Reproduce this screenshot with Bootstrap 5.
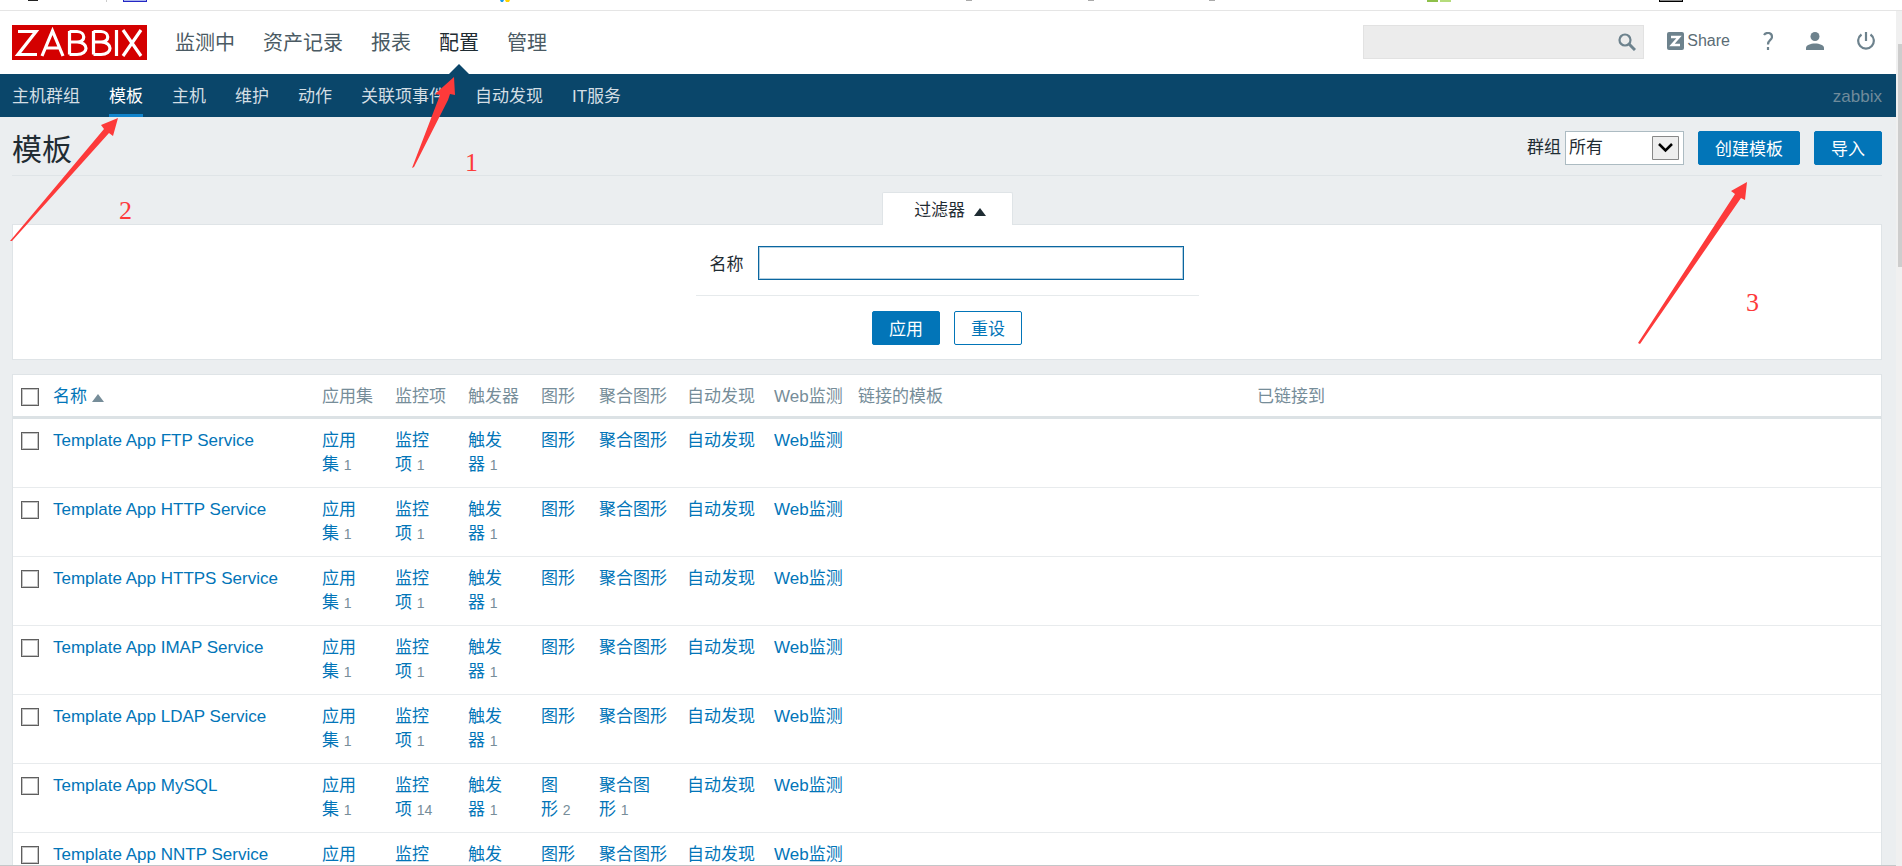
<!DOCTYPE html>
<html lang="zh-CN">
<head>
<meta charset="utf-8">
<meta name="viewport" content="width=device-width, initial-scale=1">
<title>模板</title>
<link href="https://cdn.jsdelivr.net/npm/bootstrap@5.3.0/dist/css/bootstrap.min.css" rel="stylesheet">
<style>
  html, body { height: 100%; }
  body {
    font-family: "Liberation Sans", "Noto Sans CJK SC", sans-serif;
    font-size: 17px; line-height: 24px; color: #1f2c33; background: #ebeef0;
    overflow: hidden;
  }
  a { text-decoration: none; color: #0275b8; }
  .window-frame { height: 100vh; overflow: hidden; position: relative; }
  .browser-strip { height: 11px; background: #fff; border-bottom: 1px solid #e5e5e5; }
  .browser-strip svg { display: block; width: 100%; height: 9px; }
  .pane-row { min-height: 0; }
  .page-pane { min-width: 0; min-height: 0; overflow: hidden; }
  .side-scroll { width: 6px; background: #f0f0f0; padding: 33px 0 0 2px; }
  .side-scroll .thumb { height: 223px; background: #cdcdcd; }
  .top-nav { height: 63px; background: #fff; padding: 0 14px 0 12px; }
  .brand-box { width: 135px; height: 35px; background: #d40000; }
  .brand-box svg { display: block; }
  .main-menu { gap: 28px; margin-left: 28px; font-size: 20px; line-height: 30px; }
  .main-menu a { color: #4a5a63; position: relative; }
  .main-menu a.active { color: #1f2c33; }
  .main-menu a.active::after {
    content: ""; position: absolute; left: 50%; top: 100%; margin: 6px 0 0 -11px;
    border: 11px solid transparent; border-top-width: 0; border-bottom-color: #0a466a;
  }
  .search-box { width: 281px; height: 34px; margin-bottom: 2px; background: #ececec; border: 1px solid #e2e2e2; }
  .search-box input { background: transparent; border: 0; outline: 0; flex: 1; min-width: 0; }
  .search-box button { border: 0; background: none; padding: 0 7px; line-height: 0; }
  .tool-links { margin: 0 7px 3px 23px; gap: 33px; color: #6d828d; font-size: 16px; }
  .tool-links a { color: #5b6c75; line-height: 18px; gap: 3px; }
  .tool-links svg { display: block; }
  .sub-nav { height: 43px; background: #0a466a; padding: 0 14px 0 12px; gap: 29px; }
  .sub-nav a { color: #d3dee4; line-height: 45px; height: 43px; }
  .sub-nav a.active { color: #fff; box-shadow: inset 0 -3px #1184cc; }
  .sub-nav .server { color: #6f8b9b; }
  .content-pad { padding: 0 14px 0 12px; }
  .title-row { height: 59px; padding-top: 14px; border-bottom: 1px solid #dfe4e7; }
  .title-row h1 { font-size: 30px; line-height: 38px; font-weight: 400; margin: 0; }
  .title-tools { gap: 14px; }
  .btn-z { height: 34px; border-radius: 2px; border: 1px solid #0275b8; background: #0275b8; color: #fff; padding: 3px 16px 0; font-size: 17px; line-height: 24px; }
  .btn-z.alt { background: #fff; color: #0275b8; }
  .group-select { position: relative; width: 119px; height: 34px; margin-left: 4px; }
  .group-select select { appearance: none; width: 100%; height: 100%; border: 1px solid #acbbc2; background: #fff; border-radius: 0; padding: 0 3px; color: #1f2c33; line-height: 24px; }
  .group-select svg { position: absolute; right: 5px; top: 5px; pointer-events: none; }
  .filter-tab { width: 131px; height: 33px; margin-bottom: -1px; position: relative; background: #fff; border: 1px solid #dfe4e7; border-bottom: 0; border-radius: 2px 2px 0 0; color: #1f2c33; padding: 3px 0 0 6px; }
  .filter-panel { background: #fff; border: 1px solid #dfe4e7; }
  .filter-fields { width: 503px; padding: 21px 15px 15px 14px; border-bottom: 1px solid #e6eaec; gap: 14px; }
  .filter-fields label { padding-top: 3px; }
  .filter-fields input { height: 34px; min-width: 0; flex: 1; border: 1px solid #0a66a0; box-shadow: inset 0 0 0 1px #b4cfe0; outline: 0; }
  .filter-actions { gap: 14px; padding: 15px 0 14px; }
  .tri { width: 0; height: 0; border: 6px solid transparent; border-top: 0; border-bottom: 8px solid #1f2c33; display: inline-block; }
  .tri.sort { border-bottom-color: #768d99; margin-left: 5px; }
  .list-frame { background: #fff; border: 1px solid #dfe4e7; margin-top: 14px; }
  .tpl-table { table-layout: fixed; width: 100%; margin: 0; }
  .tpl-table th { font-weight: 400; color: #768d99; padding: 10px 6px 7px; border-bottom: 3px solid #dce2e5; white-space: nowrap; }
  .tpl-table td { vertical-align: top; padding: 10px 6px; border-bottom: 1px solid #e8ebed; height: 69px; }
  .tpl-table td:first-child, .tpl-table th:first-child { padding-left: 8px; padding-right: 0; }
  .tpl-table input { appearance: none; display: block; width: 18px; height: 18px; margin: 3px 0; border: 1px solid #5e5e5e; box-shadow: inset 0 0 0 1px #c4c4c4; background: #fff; }
  .tpl-table small { font-size: 14px; color: #768d99; }
  .c-check { width: 34px; } .c-name { width: 269px; } .c-count { width: 73px; }
  .c-graph { width: 58px; } .c-screen { width: 88px; } .c-disc { width: 87px; } .c-web { width: 84px; }
  .c-linked { width: 399px; }
  .status-edge { position: absolute; left: 0; right: 6px; bottom: 0; height: 1px; background: #c4c7c9; }
  .notes { position: absolute; left: 0; top: 0; pointer-events: none; }
  .notes text { font: 26px "Liberation Serif", serif; fill: #fd3a3a; }
</style>
</head>
<body>
<div class="window-frame d-flex flex-column">
  <div class="browser-strip flex-shrink-0">
    <svg aria-hidden="true"><path d="M28 0h10v1h-10z" fill="#222"/><path d="M106 0h1v2h-1z" fill="#ccc"/><rect x="123.500" y="-6" width="23" height="7.500" fill="#aab4ee" stroke="#2427c4"/><path d="M500 0h4l-1 2h-2z" fill="#1a9be8"/><path d="M505 0h5l-1 2h-3z" fill="#ffd400"/><path d="M966 0h6v1h-6zM1088 0h6v1h-6zM1209 0h6v1h-6z" fill="#aaa"/><path d="M1427 0h11v2h-11z" fill="#8ec04a"/><path d="M1440 0h11v2h-11z" fill="#b5dc7c"/><rect x="1659.500" y="-6" width="23" height="7.500" fill="#888" stroke="#000"/></svg>
  </div>
  <div class="pane-row d-flex flex-grow-1">
    <div class="page-pane flex-grow-1">
      <header>
        <div class="top-nav d-flex align-items-center">
          <a class="brand-box" href="#" aria-label="ZABBIX"><svg width="135" height="35" aria-hidden="true"><path d="M6 6.500H24L6 29.500H25M30 31L40.500 6L51 31M34 23H47M57.500 6V29.500M57.500 6.500H65C74 7 74 17 65 17H57.500M65 17C77 17 77 29.500 65 29.500H57.500M81.500 6V29.500M81.500 6.500H89C98 7 98 17 89 17H81.500M89 17C101 17 101 29.500 89 29.500H81.500M104.500 5V31M111 5L129 31M129 5L111 31" fill="none" stroke="#fff" stroke-width="3.200"/></svg></a>
          <nav class="main-menu d-flex"><a href="#">监测中</a><a href="#">资产记录</a><a href="#">报表</a><a href="#" class="active">配置</a><a href="#">管理</a></nav>
          <form class="search-box d-flex ms-auto"><input type="text" aria-label="搜索"><button type="button" aria-label="搜索"><svg width="18" height="18" fill="none" stroke="#6d828d"><circle cx="7" cy="7" r="5.500" stroke-width="2.200"/><path d="M11 11l6 6" stroke-width="3"/></svg></button></form>
          <div class="tool-links d-flex align-items-center">
            <a href="#" class="d-flex align-items-center"><svg width="17" height="18"><rect width="17" height="18" rx="2" fill="#6d828d"/><path d="M4 5H12L5 13H13" fill="none" stroke="#fff" stroke-width="2.500"/></svg>Share</a>
            <a href="#" aria-label="帮助"><svg width="10" height="18" fill="none" stroke="#6d828d" stroke-width="2.200"><path d="M1 3C3 0 9 0 9 5C9 8 5 8 5 12.500M5 15v3"/></svg></a>
            <a href="#" aria-label="用户"><svg width="18" height="18" fill="#6d828d"><circle cx="9" cy="4.500" r="4.500"/><path d="M0 18v-2c0-6 18-6 18 0v2z"/></svg></a>
            <a href="#" aria-label="退出"><svg width="18" height="18" viewBox="0 0 18 18" fill="none" stroke="#6d828d" stroke-width="2.200"><path d="M4.500 2.500a7.800 7.800 0 1 0 9 0M9 0v9"/></svg></a>
          </div>
        </div>
        <nav class="sub-nav d-flex"><a href="#">主机群组</a><a href="#" class="active">模板</a><a href="#">主机</a><a href="#">维护</a><a href="#">动作</a><a href="#">关联项事件</a><a href="#">自动发现</a><a href="#">IT服务</a><a href="#" class="server ms-auto">zabbix</a></nav>
      </header>
      <main class="content-pad">
        <div class="title-row d-flex align-items-start">
          <h1>模板</h1>
          <div class="title-tools d-flex align-items-center ms-auto">
            <div class="d-flex align-items-center"><label for="grp">群组</label>
            <div class="group-select"><select id="grp"><option>所有</option></select><svg width="27" height="24"><path d="M.5.500h26v23h-26z" fill="#eee" stroke="#888"/><path d="M7 8l6.500 6.500L20 8" fill="none" stroke="#000" stroke-width="2.500"/></svg></div></div>
            <button type="button" class="btn-z">创建模板</button>
            <button type="button" class="btn-z">导入</button>
          </div>
        </div>
        <div class="d-flex justify-content-center pt-3"><button type="button" class="filter-tab">过滤器 <i class="tri ms-1"></i></button></div>
        <form class="filter-panel d-flex flex-column align-items-center">
          <div class="filter-fields d-flex align-items-center"><label for="nm">名称</label><input id="nm" type="text"></div>
          <div class="filter-actions d-flex"><button type="button" class="btn-z">应用</button><button type="button" class="btn-z alt">重设</button></div>
        </form>
        <div class="list-frame">
          <table class="tpl-table">
            <colgroup><col class="c-check"><col class="c-name"><col class="c-count"><col class="c-count"><col class="c-count"><col class="c-graph"><col class="c-screen"><col class="c-disc"><col class="c-web"><col class="c-linked"><col></colgroup>
            <thead><tr><th><input type="checkbox" aria-label="全选"></th><th><a href="#">名称<i class="tri sort"></i></a></th><th>应用集</th><th>监控项</th><th>触发器</th><th>图形</th><th>聚合图形</th><th>自动发现</th><th>Web监测</th><th>链接的模板</th><th>已链接到</th></tr></thead>
            <tbody id="rows"></tbody>
          </table>
        </div>
      </main>
    </div>
    <div class="side-scroll flex-shrink-0"><div class="thumb"></div></div>
  </div>
  <div class="status-edge"></div>
  <svg class="notes" width="1902" height="400">
    <g fill="#fd3a3a"><path d="M412 168L440 95L435 94L454 77L455 95L450 94L448 100L414 167Z"/><path d="M10 241L104 129L101 125L118 118L113 136L109 133L12 241Z"/><path d="M1638 343L1735 194L1731 191L1747 182L1745 200L1741 198L1640 344Z"/></g>
    <text x="465" y="171">1</text><text x="119" y="219">2</text><text x="1746" y="311">3</text>
  </svg>
</div>
<script>
  const rows = [["FTP Service",1,1,1],["HTTP Service",1,1,1],["HTTPS Service",1,1,1],["IMAP Service",1,1,1],["LDAP Service",1,1,1],["MySQL",1,14,1,2,1],["NNTP Service",1,1,1]];
  const labels = ["应用集","监控项","触发器","图形","聚合图形","自动发现","Web监测"];
  document.getElementById("rows").innerHTML = rows.map(([n, ...c]) =>
    `<tr><td><input type="checkbox" aria-label="Template App ${n}"></td><td><a href="#">Template App ${n}</a></td>` +
    labels.map((l, i) => `<td><a href="#">${l}</a>${c[i] ? `&nbsp;<small>${c[i]}</small>` : ""}</td>`).join("") + "<td></td><td></td></tr>").join("");
</script>
<script src="https://cdn.jsdelivr.net/npm/bootstrap@5.3.0/dist/js/bootstrap.bundle.min.js"></script>
</body>
</html>
